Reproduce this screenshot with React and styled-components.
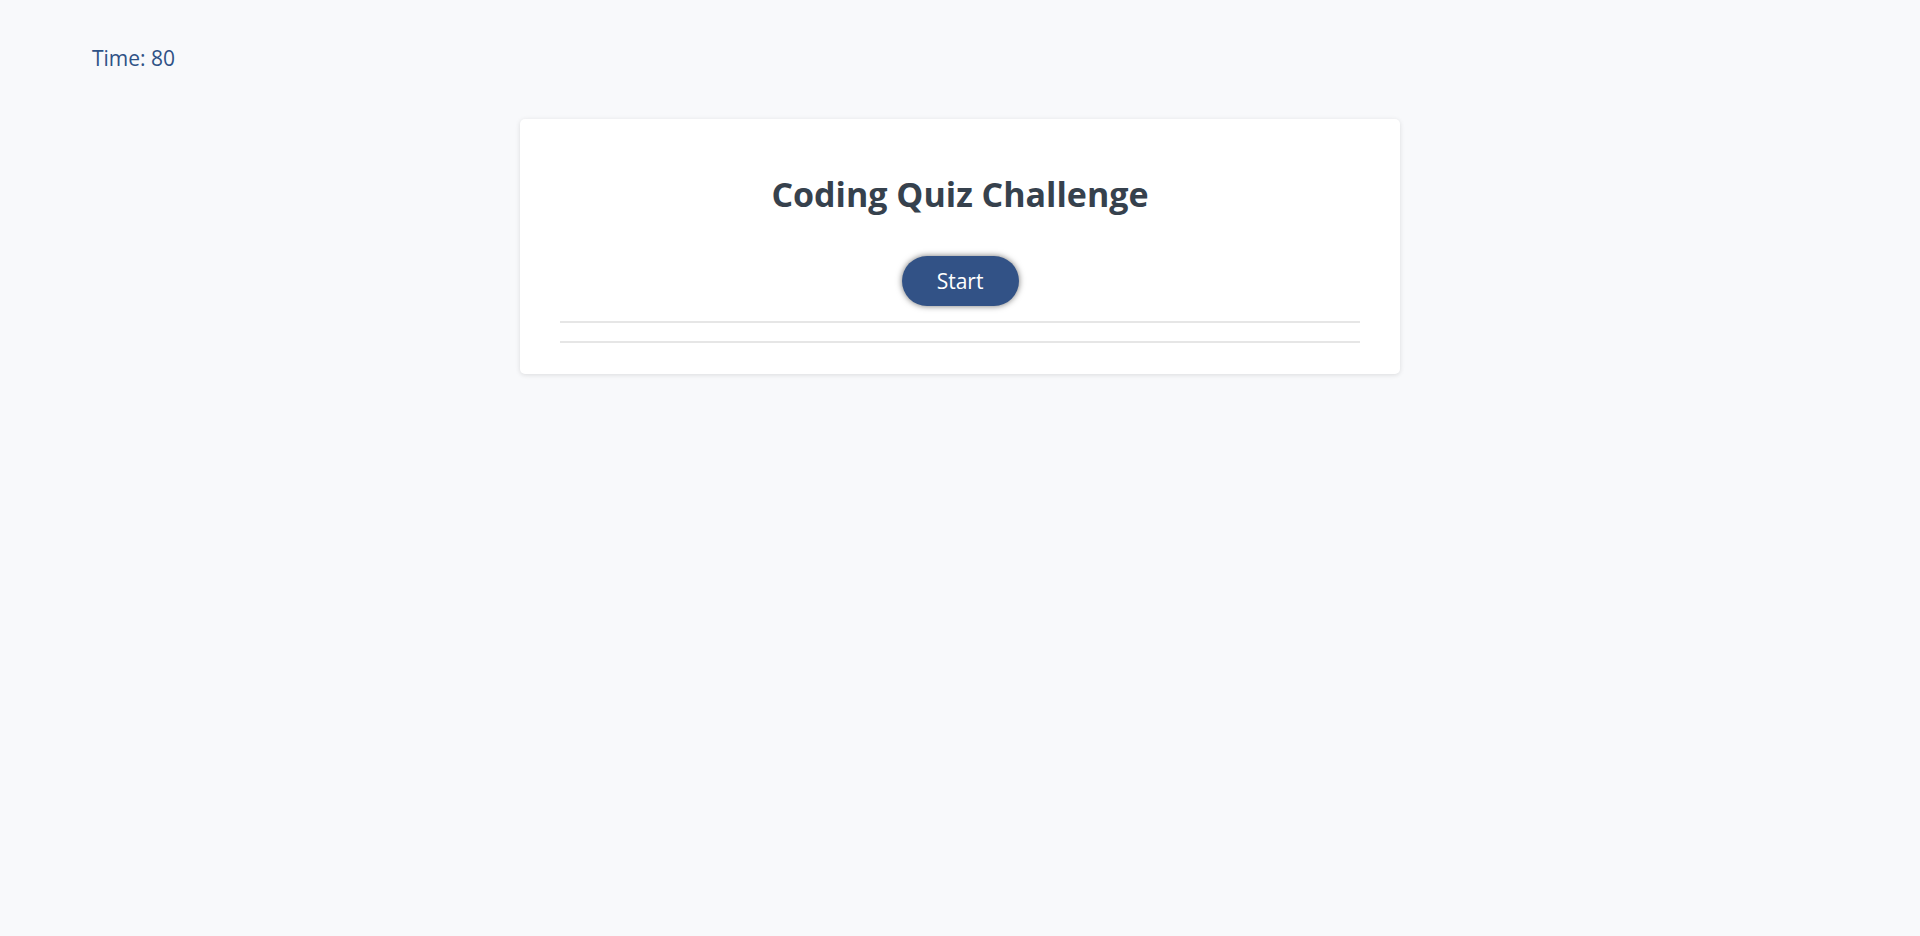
import React from "react";
import styled, { createGlobalStyle } from "styled-components";

const GlobalStyle = createGlobalStyle`
    html, body {
        margin: 0;
        padding: 0;
        background: #f8f9fb;
        font-family: "Trebuchet MS", "Open Sans", sans-serif;
    }
`;

const StyledPage = styled.div`
    min-height: 100vh;
    padding: 46px 92px;
    box-sizing: border-box;
`;

const StyledTimer = styled.p`
    margin: 0;
    font-size: 21px;
    color: #2f5286;
    line-height: 24px;
`;

const StyledCard = styled.main`
    width: 880px;
    margin: 49px auto 0;
    padding: 45px 40px 31px;
    box-sizing: border-box;
    background: #ffffff;
    border-radius: 5px;
    box-shadow: 0 1px 5px rgba(0, 0, 0, 0.12);
    text-align: center;
`;

const StyledTitle = styled.h1`
    margin: 0 0 32px;
    font-size: 34px;
    line-height: 60px;
    font-weight: bold;
    color: #36414d;
`;

const StyledStartButton = styled.button`
    width: 117px;
    height: 50px;
    border: none;
    border-radius: 25px;
    background: #325286;
    color: #ffffff;
    font-family: inherit;
    font-size: 21px;
    box-shadow: 0 0 6px rgba(0, 0, 0, 0.55);
    cursor: pointer;
`;

const StyledDivider = styled.hr`
    margin: ${(props) => props.$gap}px 0 0;
    border: none;
    border-top: 2px solid #e6e6e6;
`;

function App() {
    return (
        <StyledPage>
            <GlobalStyle />
            <StyledTimer>Time: 80</StyledTimer>
            <StyledCard>
                <StyledTitle>Coding Quiz Challenge</StyledTitle>
                <StyledStartButton>Start</StyledStartButton>
                <StyledDivider $gap={15} />
                <StyledDivider $gap={18} />
            </StyledCard>
        </StyledPage>
    );
}

export default App;
